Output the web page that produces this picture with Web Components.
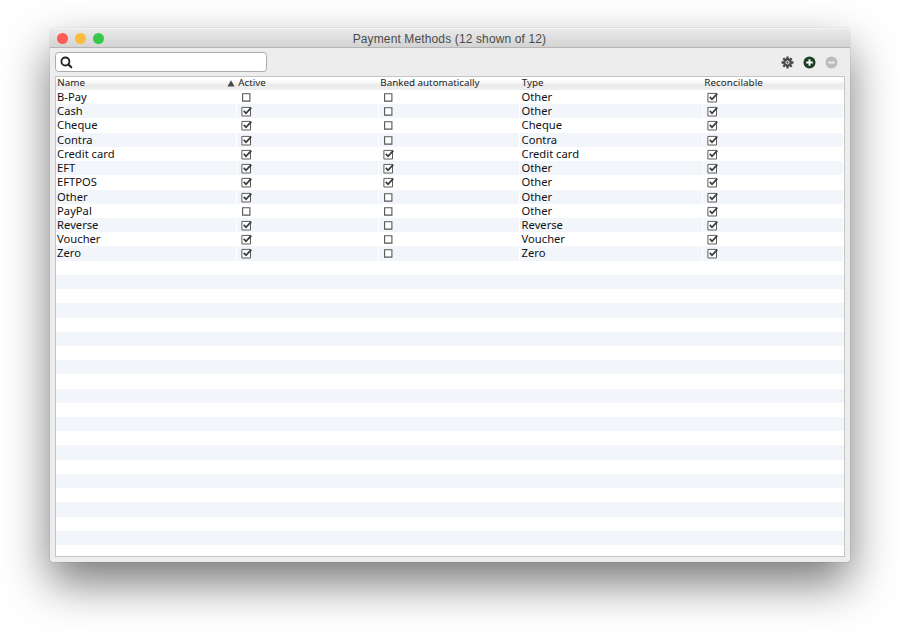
<!DOCTYPE html>
<html lang="en">
<head>
<meta charset="utf-8">
<title>Payment Methods</title>
<style>
html,body{margin:0;background:#fff;height:633px;overflow:hidden}
body{box-sizing:border-box;padding:27.5px 49.5px 0;font-family:"Noto Sans","Open Sans",sans-serif}
</style>
</head>
<body>
<app-window heading="Payment Methods (12 shown of 12)">
  <tool-bar slot="tools"></tool-bar>
  <data-table></data-table>
</app-window>
<script>
const attach = (el, html) => { el.attachShadow({mode:'open'}).innerHTML = html; return el.shadowRoot; };

customElements.define('app-window', class extends HTMLElement {
  connectedCallback() {
    attach(this, `<style>
      :host{display:flex;flex-direction:column;box-sizing:border-box;width:800.9px;height:534.5px;background:#ededed;border-radius:4px 4px 3px 3px;
        box-shadow:0 0 1px rgba(0,0,0,.4),0 21px 46px rgba(0,0,0,.53)}
      header{box-sizing:border-box;height:20.5px;flex:none;display:grid;grid-template-columns:1fr auto 1fr;align-items:center;padding:0 8px 0 7px;
        border-radius:4px 4px 0 0;background:linear-gradient(#ebebeb,#d3d3d3);border-bottom:1px solid #b5b5b5;box-shadow:inset 0 1px #f4f4f4}
      .lights{display:flex;gap:7px}
      i{box-sizing:border-box;width:11px;height:11px;border-radius:50%}
      .r{background:#fc5b57}.y{background:#fdbc40}.g{background:#35c84b}
      h1{margin:0;font:12px/20px "Liberation Sans",Arial,sans-serif;color:#4b4b4b;white-space:nowrap;letter-spacing:.13px;padding-top:1px}
      main{flex:1;min-height:0;padding:0 5px 5px 5px;display:flex;flex-direction:column}
    </style>
    <header><div class="lights"><i class="r"></i><i class="y"></i><i class="g"></i></div><h1>${this.getAttribute('heading')}</h1><span></span></header>
    <main><slot name="tools"></slot><slot></slot></main>`);
  }
});

customElements.define('tool-bar', class extends HTMLElement {
  connectedCallback() {
    attach(this, `<style>
      :host{display:flex;justify-content:space-between;align-items:center;height:28px;flex:none;padding-right:7.4px}
      .search{box-sizing:border-box;width:212px;height:20px;border:1px solid #a9ada9;border-radius:3.5px;background:#fff;display:flex;align-items:center;padding-left:4px}
      .actions{display:flex;gap:9px}
      svg{display:block}
    </style>
    <div class="search"><svg width="13" height="13" viewBox="0 0 13 13"><circle cx="5.4" cy="5.5" r="4" fill="none" stroke="#222" stroke-width="1.8"/><path d="M8.3 8.4L11.3 11.3" stroke="#222" stroke-width="2.1" stroke-linecap="round"/></svg></div>
    <div class="actions">
      <svg width="13" height="13" viewBox="-6.5 -6.5 13 13"><g stroke="#4a4a4a" stroke-width="2.3"><path d="M0-6V6M-6 0H6M-4.25-4.25L4.25 4.25M4.25-4.25L-4.25 4.25"/></g><circle r="4.4" fill="#4a4a4a"/><circle r="2.1" fill="#d8d8d8"/><circle r="1" fill="#4a4a4a"/></svg>
      <svg width="13" height="13" viewBox="0 0 13 13"><circle cx="6.5" cy="6.5" r="6" fill="#1d4023"/><path d="M6.5 3.2V9.8M3.2 6.5H9.8" stroke="#fff" stroke-width="1.9"/></svg>
      <svg width="13" height="13" viewBox="0 0 13 13"><circle cx="6.5" cy="6.5" r="6" fill="#bcbcbc"/><path d="M3.2 6.5H9.8" stroke="#ededed" stroke-width="1.9"/></svg>
    </div>`);
  }
});

customElements.define('check-mark', class extends HTMLElement {
  connectedCallback() {
    const on = this.hasAttribute('checked');
    attach(this, `<style>:host{display:block;width:12px;height:12px}svg{display:block}</style>
    <svg width="12" height="12" viewBox="0 0 12 12">${on
      ? '<path d="M.9 2.4H9.5V11H.9Z" fill="#fff" stroke="#5c5c5c" stroke-width="1"/><path d="M2.8 5.9L5 8.3L10.3 2.6" fill="none" stroke="#3a3a3a" stroke-width="1.7"/>'
      : '<path d="M1.6 2.8H8.9V10.1H1.6Z" fill="#fff" stroke="#555" stroke-width="1.1"/>'}</svg>`);
  }
});

customElements.define('table-row', class extends HTMLElement {
  connectedCallback() {
    attach(this, `<style>
      :host{display:grid;grid-template-columns:181px 142px 141.5px 182.5px 1fr;height:14.22px;flex:none;font-size:11.2px;line-height:14px;color:#111}
      ::slotted(*){box-sizing:border-box;padding-left:1.6px;white-space:nowrap;background:var(--stripe,#fff);border-right:1px solid #fff}
    </style><slot></slot>`);
  }
});

customElements.define('data-table', class extends HTMLElement {
  connectedCallback() {
    const data = [['B‒Pay',0,0,'Other'],['Cash',1,0,'Other'],['Cheque',1,0,'Cheque'],['Contra',1,0,'Contra'],['Credit card',1,1,'Credit card'],['EFT',1,1,'Other'],['EFTPOS',1,1,'Other'],['Other',1,0,'Other'],['PayPal',0,0,'Other'],['Reverse',1,0,'Reverse'],['Voucher',1,0,'Voucher'],['Zero',1,0,'Zero']];
    data[0][0] = 'B-Pay';
    const box = v => `<div class="c"><check-mark ${v ? 'checked' : ''}></check-mark></div>`;
    let rows = '';
    for (let i = 0; i < 33; i++) {
      const d = data[i], odd = i % 2 ? 'odd' : '';
      rows += d ? `<table-row class="${odd}"><div>${d[0]}</div>${box(d[1])}${box(d[2])}<div>${d[3]}</div>${box(1)}</table-row>`
                : `<div class="blank ${odd}"></div>`;
    }
    attach(this, `<style>
      :host{display:flex;flex-direction:column;flex:1;min-height:0;box-sizing:border-box;overflow:hidden;background:#fff;border:1px solid #c6c6c6}
      .head{display:grid;grid-template-columns:181px 142px 141.5px 182.5px 1fr;height:13px;flex:none;background:linear-gradient(#fff 20%,#f4f4f4 50%,#ebebeb 52%,#efefef);font-size:9.8px;line-height:12px;color:#1c1c1c}
      .head span{padding-left:1.8px;white-space:nowrap}
      .head .sorted{display:flex;justify-content:space-between;padding-right:2px}
      .odd{--stripe:#f2f6fb}
      .blank{height:14.22px;flex:none;background:var(--stripe,#fff)}
      table-row div.c{padding-left:4px;padding-top:1px}
      svg{display:block;margin-top:3px}
    </style>
    <div class="head"><span class="sorted">Name<svg width="8" height="7" viewBox="0 0 8 7"><path d="M4 .2L7.5 6.5H.5Z" fill="#484848"/></svg></span><span>Active</span><span>Banked automatically</span><span>Type</span><span style="letter-spacing:.08px">Reconcilable</span></div>
    ${rows}`);
  }
});
</script>
</body>
</html>
